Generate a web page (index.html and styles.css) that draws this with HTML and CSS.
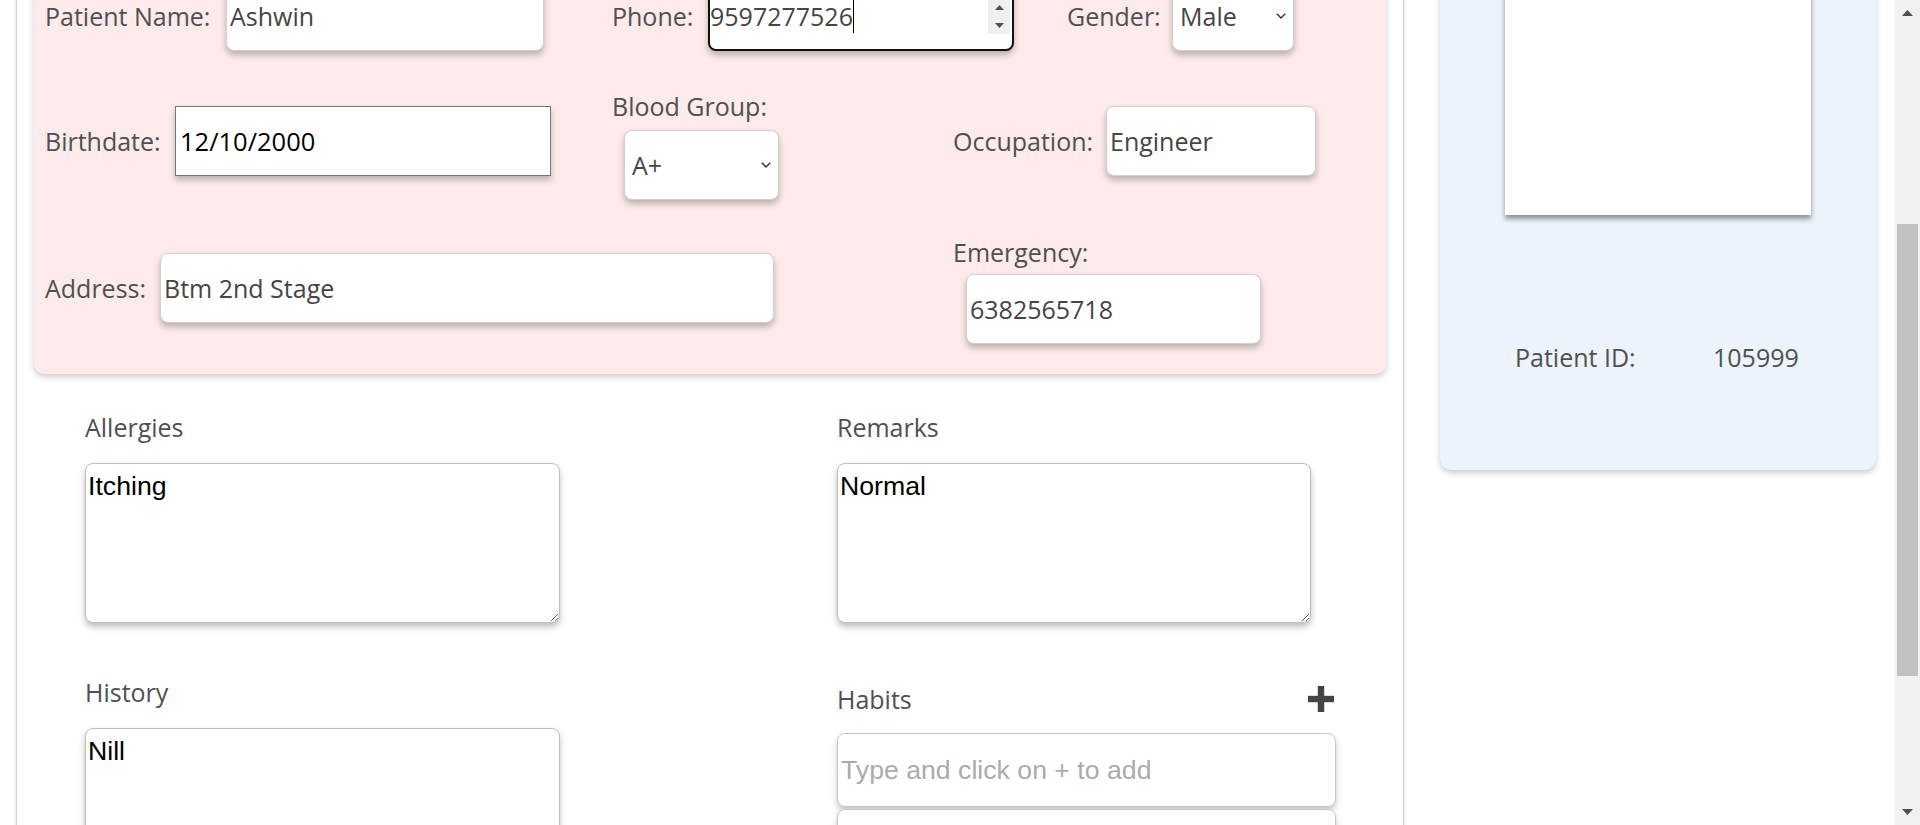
FILE: index.html
```html
<!DOCTYPE html>
<html lang="en">
<head>
<meta charset="utf-8">
<title>Patient Details</title>
<link rel="stylesheet" href="styles.css">
</head>
<body>
<div class="app">
  <div class="viewport" id="viewport">
    <div class="page">
      <main class="main">
        <section class="card-pink">
          <div class="row row-1">
            <div class="field f-name">
              <label class="lbl">Patient Name:</label>
              <input class="inp w-name" type="text" value="Ashwin">
            </div>
            <div class="field f-phone">
              <label class="lbl">Phone:</label>
              <div class="inp inp-focus w-phone">
                <span class="val">9597277526</span><span class="caret"></span>
                <span class="spin">
                  <span class="spin-half"><svg width="9" height="5" viewBox="0 0 9 5"><polygon points="0,5 4.5,0 9,5" fill="#505050"/></svg></span>
                  <span class="spin-half"><svg width="9" height="5" viewBox="0 0 9 5"><polygon points="0,0 9,0 4.5,5" fill="#505050"/></svg></span>
                </span>
              </div>
            </div>
            <div class="field f-gender">
              <label class="lbl">Gender:</label>
              <div class="sel w-gender"><span>Male</span><svg class="chev" width="10" height="6" viewBox="0 0 10 6"><polyline points="0.8,0.8 5,5 9.2,0.8" fill="none" stroke="#333" stroke-width="1.4"/></svg></div>
            </div>
          </div>

          <div class="row row-2">
            <div class="field f-birth">
              <label class="lbl">Birthdate:</label>
              <input class="inp inp-date w-birth" type="text" value="12/10/2000">
            </div>
            <div class="field stack stack-2">
              <label class="lbl">Blood Group:</label>
              <div class="sel w-blood"><span>A+</span><svg class="chev" width="10" height="6" viewBox="0 0 10 6"><polyline points="0.8,0.8 5,5 9.2,0.8" fill="none" stroke="#333" stroke-width="1.4"/></svg></div>
            </div>
            <div class="field f-occ">
              <label class="lbl">Occupation:</label>
              <input class="inp w-occ" type="text" value="Engineer">
            </div>
          </div>

          <div class="row row-3">
            <div class="field f-addr">
              <label class="lbl">Address:</label>
              <input class="inp w-addr" type="text" value="Btm 2nd Stage">
            </div>
            <div class="field stack stack-3">
              <label class="lbl">Emergency:</label>
              <input class="inp w-emg" type="text" value="6382565718">
            </div>
          </div>
        </section>

        <section class="notes">
          <div class="note-col">
            <div class="note-label">Allergies</div>
            <textarea class="note-area">Itching</textarea>
            <div class="note-label">History</div>
            <textarea class="note-area">Nill</textarea>
          </div>
          <div class="note-col">
            <div class="note-label">Remarks</div>
            <textarea class="note-area w-remarks">Normal</textarea>
            <div class="habits-head">
              <span class="note-label">Habits</span>
              <button class="add-btn" type="button" aria-label="Add habit">
                <svg width="26" height="26" viewBox="0 0 26 26"><rect x="0" y="9.8" width="26" height="6.4" fill="#444"/><rect x="9.8" y="0" width="6.4" height="26" fill="#444"/></svg>
              </button>
            </div>
            <input class="habit-inp" type="text" placeholder="Type and click on + to add">
            <div class="habit-list"></div>
          </div>
        </section>
      </main>

      <aside class="side-card">
        <div class="photo"></div>
        <div class="id-row">
          <span class="id-label">Patient ID:</span>
          <span class="id-value">105999</span>
        </div>
      </aside>
    </div>
  </div>

  <div class="scrollbar" aria-hidden="true">
    <div class="sb-btn"><svg width="11" height="6" viewBox="0 0 11 6"><polygon points="0,6 5.5,0 11,6" fill="#505050"/></svg></div>
    <div class="sb-track"><div class="sb-thumb"></div></div>
    <div class="sb-btn"><svg width="11" height="6" viewBox="0 0 11 6"><polygon points="0,0 11,0 5.5,6" fill="#505050"/></svg></div>
  </div>
</div>
<script src="script.js"></script>
</body>
</html>
```

FILE: styles.css
```css
* { box-sizing: border-box; }

html, body {
  margin: 0;
  height: 100%;
  overflow: hidden;
  background: #ffffff;
}

body {
  font-family: "Open Sans", "Noto Sans", sans-serif;
  color: #505050;
}

.app {
  display: flex;
  width: 1920px;
  height: 825px;
}

.viewport {
  flex: 1;
  height: 825px;
  overflow: hidden;
}

.page {
  display: flex;
  align-items: flex-start;
  gap: 36px;
  padding: 20px 0 80px 16px;
}

/* main white container */
.main {
  flex: none;
  width: 1388px;
  background: #fff;
  border: 1px solid #d3d3d3;
  box-shadow: 0 0 3px rgba(0, 0, 0, 0.18);
  padding: 96px 17px 60px;
}

/* pink card */
.card-pink {
  background: #fdeaea;
  border-radius: 10px;
  box-shadow: 0 3px 6px rgba(0, 0, 0, 0.2);
  padding: 30px 0 30px 11px;
  display: flex;
  flex-direction: column;
  gap: 31px;
}

.row {
  display: grid;
  align-items: center;
}
.row-1 { grid-template-columns: 567px 455px auto; }
.row-2 { grid-template-columns: 567px 341px auto; }
.row-3 { grid-template-columns: 908px auto; }

.field {
  display: flex;
  align-items: center;
}

.lbl {
  flex: none;
  font-size: 25px;
  line-height: 34px;
  color: #505050;
  white-space: nowrap;
}

.f-name .lbl { width: 181px; }
.f-phone .lbl { width: 96px; }
.f-gender .lbl { width: 105px; }
.f-birth .lbl { width: 130px; }
.f-occ .lbl { width: 153px; }
.f-addr .lbl { width: 115px; }

.stack {
  flex-direction: column;
  align-items: flex-start;
}
.stack-2 .lbl { line-height: 48px; }
.stack-2 .sel { margin-left: 12px; }
.stack-3 .lbl { line-height: 43px; }
.stack-3 .inp { margin-left: 13px; }

.inp {
  flex: none;
  display: block;
  height: 70px;
  margin: 0;
  padding: 0 3px;
  font-family: "Open Sans", "Noto Sans", sans-serif;
  font-size: 25px;
  color: #454545;
  background: #fff;
  border: 1px solid #d0d0d0;
  border-radius: 8px;
  box-shadow: 0 4px 6px rgba(0, 0, 0, 0.25);
  outline: none;
}

.w-name { width: 318px; }
.w-phone { width: 306px; }
.w-birth { width: 376px; }
.w-occ { width: 210px; }
.w-addr { width: 614px; }
.w-emg { width: 295px; }

.inp-date {
  border: 1px solid #767676;
  border-radius: 0;
  color: #000;
  font-size: 25.5px;
  padding: 0 4px;
}

/* focused phone field */
.inp-focus {
  display: flex;
  align-items: center;
  border: 2px solid #111;
  padding: 0 2px 0 0;
}
.inp-focus .val { line-height: 34px; }
.caret {
  width: 1px;
  height: 34px;
  background: #000;
}
.spin {
  margin-left: auto;
  width: 22px;
  height: 36px;
  background: #efefef;
  display: flex;
  flex-direction: column;
}
.spin-half {
  flex: 1;
  display: flex;
  align-items: center;
  justify-content: center;
}

/* select look */
.sel {
  flex: none;
  height: 70px;
  display: flex;
  align-items: center;
  justify-content: space-between;
  padding: 0 7px;
  font-size: 25px;
  color: #454545;
  background: #fff;
  border: 1px solid #cfcfcf;
  border-radius: 8px;
  box-shadow: 0 4px 6px rgba(0, 0, 0, 0.25);
}
.w-gender { width: 122px; }
.w-blood { width: 155px; }
.chev { flex: none; }

/* notes */
.notes {
  display: grid;
  grid-template-columns: 752px 499px;
  padding: 36px 0 0 51px;
}

.note-col {
  display: flex;
  flex-direction: column;
  align-items: flex-start;
}

.note-label {
  font-size: 25px;
  line-height: 34px;
  color: #505050;
  margin-bottom: 19px;
}

.note-area {
  display: block;
  width: 475px;
  height: 160px;
  margin: 0 0 52px;
  padding: 7px 2px;
  font-family: "Liberation Sans", Arial, sans-serif;
  font-size: 26.67px;
  color: #000;
  background: #fff;
  border: 1px solid #bdbdbd;
  border-radius: 8px;
  box-shadow: 0 4px 6px rgba(0, 0, 0, 0.25);
  outline: none;
  resize: both;
}
.w-remarks { width: 474px; }

.habits-head {
  width: 499px;
  height: 44px;
  margin-top: 2px;
  display: flex;
  align-items: center;
  justify-content: space-between;
}
.habits-head .note-label { margin-bottom: 0; }

.add-btn {
  display: flex;
  align-items: center;
  background: none;
  border: 0;
  padding: 0 2px 0 0;
  margin: 0;
  cursor: pointer;
}

.habit-inp {
  display: block;
  width: 499px;
  height: 74px;
  margin: 12px 0 0;
  padding: 0 3px;
  font-family: "Liberation Sans", Arial, sans-serif;
  font-size: 26.67px;
  color: #000;
  background: #fff;
  border: 1px solid #c8c8c8;
  border-radius: 8px;
  box-shadow: 0 4px 6px rgba(0, 0, 0, 0.22);
  outline: none;
}
.habit-inp::placeholder { color: #ababab; }

.habit-list {
  width: 499px;
  height: 140px;
  margin-top: 2px;
  background: #fff;
  border: 1px solid #c8c8c8;
  border-radius: 8px;
  box-shadow: 0 4px 6px rgba(0, 0, 0, 0.22);
}

/* right side card */
.side-card {
  flex: none;
  width: 436px;
  background: #ecf3fb;
  border-radius: 12px;
  box-shadow: 0 3px 6px rgba(0, 0, 0, 0.2);
  padding: 40px 0 96px;
  display: flex;
  flex-direction: column;
  align-items: center;
}

.photo {
  width: 306px;
  height: 321px;
  background: #fff;
  box-shadow: 0 4px 5px rgba(0, 0, 0, 0.4);
}

.id-row {
  align-self: stretch;
  display: flex;
  margin-top: 125px;
  padding-left: 75px;
  font-size: 25px;
  line-height: 34px;
  color: #505050;
}
.id-label { width: 198px; }

/* fake browser scrollbar */
.scrollbar {
  flex: none;
  width: 25px;
  height: 825px;
  background: #f1f1f1;
  display: flex;
  flex-direction: column;
}
.sb-btn {
  height: 26px;
  display: flex;
  align-items: center;
  justify-content: center;
}
.sb-track {
  flex: 1;
  padding: 198px 2px 0;
}
.sb-thumb {
  height: 452px;
  background: #c1c1c1;
}
```

FILE: script.js
```js
(function () {
  var vp = document.getElementById('viewport');
  function scrollIt() { vp.scrollTop = 166; }
  scrollIt();
  window.addEventListener('load', scrollIt);
})();
```
